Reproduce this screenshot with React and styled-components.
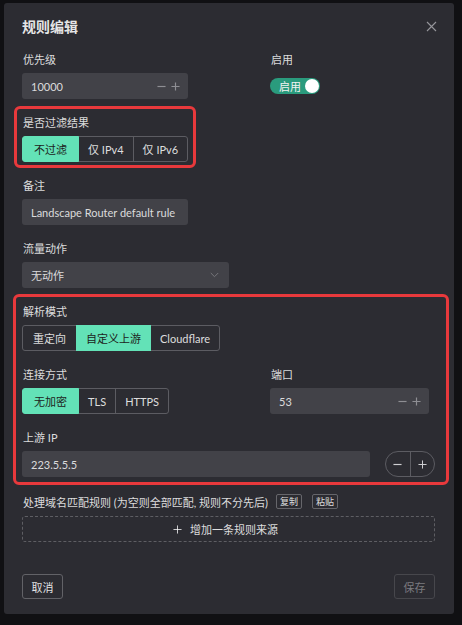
import React from "react";
import styled, { createGlobalStyle, css } from "styled-components";

const GlobalStyle = createGlobalStyle`
  html, body { margin: 0; padding: 0; background: #101013; }
  body {
    width: 462px; height: 625px; overflow: hidden;
    font-family: Lato, "Noto Sans CJK SC", sans-serif;
    -webkit-font-smoothing: antialiased;
  }
  * { box-sizing: border-box; }
`;

const Backdrop = styled.div`
  padding: 3px 8px 0 4px;
`;

const Modal = styled.div`
  width: 450px;
  height: 611px;
  background: #2c2c32;
  border-radius: 3px;
  padding: 14px 19px 15px 18px;
  display: flex;
  flex-direction: column;
  color: rgba(255, 255, 255, 0.82);
`;

const Header = styled.div`
  height: 19px;
  display: flex;
  align-items: center;
  justify-content: space-between;
  margin-bottom: 16px;
`;

const Title = styled.div`
  font-size: 14px;
  font-weight: 700;
  color: rgba(255, 255, 255, 0.9);
  line-height: 19px;
`;

const CloseBtn = styled.button`
  all: unset;
  width: 12px;
  height: 12px;
  margin-right: -2px;
  display: flex;
  align-items: center;
  justify-content: center;
  color: #96969b;
`;

const Row = styled.div`
  display: grid;
  grid-template-columns: 248px 1fr;
`;

const Field = styled.div`
  display: flex;
  flex-direction: column;
  width: ${(p) => (p.$w ? `${p.$w}px` : "auto")};
  margin-bottom: ${(p) => (p.$last ? 0 : 16)}px;
`;

const Label = styled.div`
  height: 16px;
  line-height: 16px;
  font-size: 11px;
  margin-bottom: 5px;
  padding-left: 1px;
  color: rgba(255, 255, 255, 0.85);
  white-space: nowrap;
`;

const Control = styled.div`
  height: 26px;
  display: flex;
  align-items: center;
`;

const Input = styled.div`
  width: ${(p) => p.$w}px;
  height: 26px;
  border-radius: 3px;
  background: #424248;
  display: flex;
  align-items: center;
  padding: 0 8px 0 9px;
  font-size: 11px;
  color: rgba(255, 255, 255, 0.82);
  justify-content: space-between;
`;

const Steppers = styled.div`
  display: flex;
  align-items: center;
  gap: 5px;
  color: #8e8e93;
`;

const Chevron = styled.span`
  display: flex;
  color: #77777c;
  margin-right: 2px;
`;

const Switch = styled.div`
  width: 50px;
  height: 16px;
  border-radius: 8px;
  background: #2a9b7d;
  display: flex;
  align-items: center;
  justify-content: space-between;
  padding: 0 1px 0 9px;
  font-size: 11px;
  color: #f2f2f2;
`;

const Knob = styled.span`
  width: 14px;
  height: 14px;
  border-radius: 50%;
  background: #fff;
`;

const Group = styled.div`
  display: flex;
  height: 26px;
`;

const Seg = styled.div`
  height: 26px;
  padding: 0 ${(p) => (p.$pad ? p.$pad : 9)}px;
  display: flex;
  align-items: center;
  justify-content: center;
  font-size: 11px;
  white-space: nowrap;
  border: 1px solid #5c5c62;
  margin-left: -1px;
  color: rgba(255, 255, 255, 0.85);
  &:first-child { margin-left: 0; border-radius: 3px 0 0 3px; }
  &:last-child { border-radius: 0 3px 3px 0; }
  ${(p) =>
    p.$active &&
    css`
      background: #63e2b7;
      border-color: #63e2b7;
      color: #1d2320;
      position: relative;
      z-index: 1;
    `}
`;

const Annotated = styled.div`
  position: relative;
  width: ${(p) => (p.$w ? `${p.$w}px` : "auto")};
  margin-bottom: 16px;
  &::after {
    content: "";
    position: absolute;
    inset: ${(p) => p.$inset};
    border: 3px solid #e8393c;
    border-radius: 6px;
    pointer-events: none;
  }
`;

const IpRow = styled.div`
  display: flex;
  align-items: center;
  gap: 15px;
`;

const Pill = styled.div`
  width: 50px;
  height: 26px;
  border-radius: 13px;
  border: 1px solid #5c5c62;
  display: flex;
  color: #cfcfd2;
`;

const PillHalf = styled.div`
  flex: 1;
  display: flex;
  align-items: center;
  justify-content: center;
  & + & { border-left: 1px solid #5c5c62; }
`;

const RuleLine = styled.div`
  display: flex;
  align-items: center;
  height: 17px;
  font-size: 11px;
  color: rgba(255, 255, 255, 0.85);
  padding-left: 1px;
  margin-bottom: 6px;
`;

const TinyBtn = styled.div`
  width: 26px;
  height: 15px;
  border: 1px solid #66666b;
  border-radius: 2px;
  font-size: 9px;
  display: flex;
  align-items: center;
  justify-content: center;
  margin-left: ${(p) => p.$ml}px;
  color: rgba(255, 255, 255, 0.85);
`;

const DashedBtn = styled.div`
  height: 26px;
  border: 1px dashed #5e5e63;
  border-radius: 3px;
  display: flex;
  align-items: center;
  justify-content: center;
  gap: 8px;
  font-size: 11px;
  color: rgba(255, 255, 255, 0.85);
  padding-right: 6px;
`;

const Footer = styled.div`
  margin-top: auto;
  display: flex;
  justify-content: space-between;
`;

const FootBtn = styled.div`
  width: 41px;
  height: 25px;
  border: 1px solid ${(p) => (p.$disabled ? "#47474c" : "#626267")};
  border-radius: 3px;
  display: flex;
  align-items: center;
  justify-content: center;
  font-size: 11px;
  color: ${(p) => (p.$disabled ? "rgba(255,255,255,0.38)" : "rgba(255,255,255,0.88)")};
`;

const Minus = ({ size = 9 }) => (
  <svg width={size} height={size} viewBox="0 0 10 10">
    <path d="M0.5 5h9" stroke="currentColor" strokeWidth="1.3" />
  </svg>
);
const Plus = ({ size = 9, w = 1.3 }) => (
  <svg width={size} height={size} viewBox="0 0 10 10">
    <path d="M0.5 5h9M5 0.5v9" stroke="currentColor" strokeWidth={w} />
  </svg>
);

export default function App() {
  return (
    <>
      <GlobalStyle />
      <Backdrop>
        <Modal>
          <Header>
            <Title>规则编辑</Title>
            <CloseBtn>
              <svg width="11" height="11" viewBox="0 0 11 11">
                <path d="M1 1l9 9M10 1l-9 9" stroke="currentColor" strokeWidth="1.1" />
              </svg>
            </CloseBtn>
          </Header>

          <Row>
            <Field>
              <Label>优先级</Label>
              <Control>
                <Input $w={166}>
                  <span>10000</span>
                  <Steppers>
                    <Minus />
                    <Plus />
                  </Steppers>
                </Input>
              </Control>
            </Field>
            <Field>
              <Label>启用</Label>
              <Control>
                <Switch>
                  <span>启用</span>
                  <Knob />
                </Switch>
              </Control>
            </Field>
          </Row>

          <Annotated $w={166} $inset="-9px -8px -6px -8px">
            <Field $last>
              <Label>是否过滤结果</Label>
              <Group>
                <Seg $active $pad={11}>不过滤</Seg>
                <Seg>仅 IPv4</Seg>
                <Seg>仅 IPv6</Seg>
              </Group>
            </Field>
          </Annotated>

          <Field>
            <Label>备注</Label>
            <Control>
              <Input $w={166}>Landscape Router default rule</Input>
            </Control>
          </Field>

          <Field>
            <Label>流量动作</Label>
            <Control>
              <Input $w={207}>
                <span>无动作</span>
                <Chevron>
                  <svg width="9" height="6" viewBox="0 0 9 6">
                    <path d="M0.8 1l3.7 3.7L8.2 1" stroke="currentColor" strokeWidth="1" fill="none" />
                  </svg>
                </Chevron>
              </Input>
            </Control>
          </Field>

          <Annotated $inset="-10px -14px -8px -9px">
            <Field>
              <Label>解析模式</Label>
              <Group>
                <Seg $pad={10}>重定向</Seg>
                <Seg $active>自定义上游</Seg>
                <Seg>Cloudflare</Seg>
              </Group>
            </Field>
            <Row>
              <Field>
                <Label>连接方式</Label>
                <Group>
                  <Seg $active $pad={11}>无加密</Seg>
                  <Seg>TLS</Seg>
                  <Seg>HTTPS</Seg>
                </Group>
              </Field>
              <Field>
                <Label>端口</Label>
                <Control>
                  <Input $w={159}>
                    <span>53</span>
                    <Steppers>
                      <Minus />
                      <Plus />
                    </Steppers>
                  </Input>
                </Control>
              </Field>
            </Row>
            <Field $last>
              <Label>上游 IP</Label>
              <IpRow>
                <Input $w={348}>223.5.5.5</Input>
                <Pill>
                  <PillHalf>
                    <Minus size={9} />
                  </PillHalf>
                  <PillHalf>
                    <Plus size={9} w={1.1} />
                  </PillHalf>
                </Pill>
              </IpRow>
            </Field>
          </Annotated>

          <RuleLine>
            <span>处理域名匹配规则 (为空则全部匹配, 规则不分先后)</span>
            <TinyBtn $ml={8}>复制</TinyBtn>
            <TinyBtn $ml={10}>粘贴</TinyBtn>
          </RuleLine>
          <DashedBtn>
            <Plus size={9} w={1} />
            <span>增加一条规则来源</span>
          </DashedBtn>

          <Footer>
            <FootBtn>取消</FootBtn>
            <FootBtn $disabled>保存</FootBtn>
          </Footer>
        </Modal>
      </Backdrop>
    </>
  );
}
